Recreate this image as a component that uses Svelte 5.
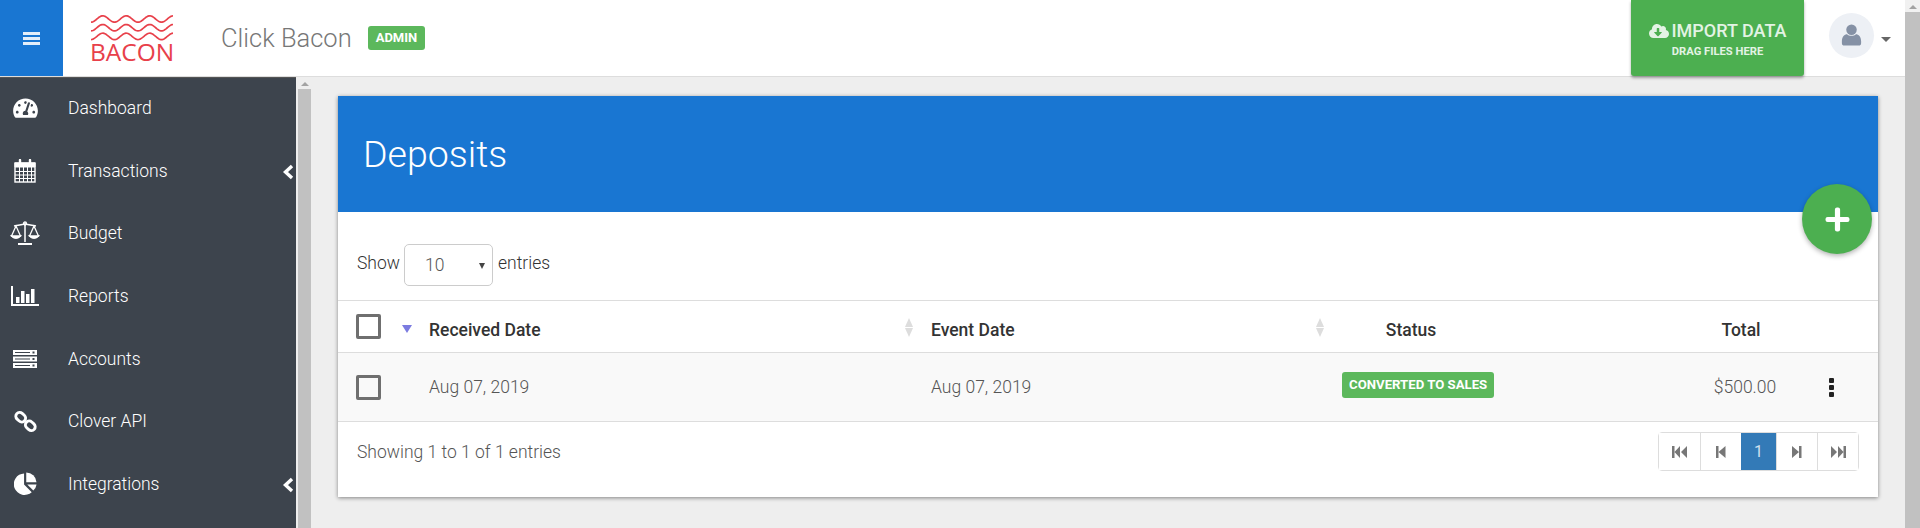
<script>
  const nav = [
    { label: 'Dashboard', icon: 'gauge' },
    { label: 'Transactions', icon: 'calendar', more: true },
    { label: 'Budget', icon: 'scale' },
    { label: 'Reports', icon: 'chart' },
    { label: 'Accounts', icon: 'server' },
    { label: 'Clover API', icon: 'link' },
    { label: 'Integrations', icon: 'pie', more: true }
  ];

  // logo wave, one period is about 23px
  function wave(y) {
    let d = '';
    for (let x = 0; x <= 82; x++) {
      d += (x ? 'L' : 'M') + x + ' ' + (y + 3.2 * Math.cos((x * Math.PI * 2) / 23.5)).toFixed(2);
    }
    return d;
  }
</script>

<div class="page">
  <div class="app">
    <header class="topbar">
      <button class="burger" aria-label="Menu">
        <span></span><span></span><span></span>
      </button>
      <div class="logo">
        <svg class="waves" viewBox="0 0 82 26" width="82" height="26" fill="none" stroke="#e8404a" stroke-width="1.7">
          <path d={wave(4)} />
          <path d={wave(12.7)} />
          <path d={wave(21.4)} />
        </svg>
        <div class="logo-text">BACON</div>
      </div>
      <div class="brand">Click Bacon</div>
      <span class="admin">ADMIN</span>
      <div class="spacer"></div>
      <button class="import">
        <span class="import-main">
          <svg viewBox="0 0 640 512" width="20" height="16" fill="currentColor"><path d="M537.6 226.6c4.1-10.7 6.4-22.4 6.4-34.6 0-53-43-96-96-96-19.7 0-38.1 6-53.3 16.2C367 64.2 315.3 32 256 32c-88.4 0-160 71.6-160 160 0 2.7.1 5.4.2 8.1C40.2 219.8 0 273.2 0 336c0 79.5 64.5 144 144 144h368c70.7 0 128-57.3 128-128 0-61.9-44-113.6-102.4-125.4zm-132.9 88.7L299.3 420.7c-6.2 6.2-16.4 6.2-22.6 0L171.3 315.3c-10.1-10.1-2.9-27.3 11.3-27.3H248V176c0-8.8 7.2-16 16-16h48c8.8 0 16 7.2 16 16v112h65.4c14.2 0 21.4 17.2 11.3 27.3z"/></svg>
          IMPORT DATA
        </span>
        <span class="import-sub">DRAG FILES HERE</span>
      </button>
      <div class="avatar">
        <svg viewBox="0 0 24 26" width="21" height="24" fill="#8591a5">
          <circle cx="12" cy="7" r="6" />
          <path d="M1 20 C1 15 4 12 7 12 C9 14.500 15 14.500 17 12 C20 12 23 15 23 20 V22 Q23 25 20 25 H4 Q1 25 1 22 Z" />
        </svg>
      </div>
      <span class="caret"></span>
    </header>

    <div class="body">
      <aside class="sidebar">
        {#each nav as item}
          <a class="nav-item" href="#top">
            <span class="nav-icon">
              {#if item.icon === 'gauge'}
                <svg viewBox="0 0 576 512" width="25" height="22" fill="#fff"><path d="M288 32C128.94 32 0 160.94 0 320c0 52.8 14.25 102.26 39.06 144.8 5.61 9.62 16.3 15.2 27.44 15.2h443c11.14 0 21.83-5.58 27.44-15.2C561.75 422.26 576 372.8 576 320c0-159.06-128.94-288-288-288zm0 64c14.71 0 26.58 10.13 30.32 23.65-1.11 2.26-2.64 4.23-3.45 6.67l-9.22 27.67c-5.13 3.49-10.97 6.01-17.64 6.01-17.67 0-32-14.33-32-32S270.33 96 288 96zM96 384c-17.67 0-32-14.33-32-32s14.33-32 32-32 32 14.33 32 32-14.33 32-32 32zm48-160c-17.67 0-32-14.33-32-32s14.33-32 32-32 32 14.33 32 32-14.33 32-32 32zm246.77-72.41l-61.33 184C343.13 347.33 352 364.54 352 384c0 11.72-3.38 22.55-8.88 32H232.88c-5.5-9.45-8.88-20.28-8.88-32 0-33.94 26.5-61.43 59.9-63.59l61.34-184.01c4.17-12.56 17.73-19.45 30.36-15.17 12.57 4.19 19.35 17.79 15.17 30.36zm14.66 57.2l15.52-46.55c3.47-1.29 7.13-2.23 11.05-2.23 17.67 0 32 14.33 32 32s-14.33 32-32 32c-11.38-.01-20.89-6.28-26.57-15.22zM480 384c-17.67 0-32-14.33-32-32s14.33-32 32-32 32 14.33 32 32-14.33 32-32 32z"/></svg>
              {:else if item.icon === 'calendar'}
                <svg viewBox="0 0 22 24" width="22" height="24" fill="none" stroke="#fff">
                  <path d="M1 4 H21 V8 H1 Z" fill="#fff" />
                  <rect x="1" y="4" width="20" height="19" stroke-width="1.4" />
                  <path d="M1 12.500 H21 M1 16 H21 M1 19.500 H21 M5.500 8 V23 M9.500 8 V23 M13.500 8 V23 M17.500 8 V23" stroke-width="1" />
                  <path d="M6 1 V5 M16 1 V5" stroke-width="2.400" stroke-linecap="round" />
                </svg>
              {:else if item.icon === 'scale'}
                <svg viewBox="0 0 30 24" width="30" height="24" fill="none" stroke="#fff" stroke-width="1.300">
                  <path d="M15 2 V21 M4 5 L15 3 L26 5" stroke-width="1.500" />
                  <circle cx="15" cy="2.500" r="1.500" />
                  <path d="M6 5 L1.500 15 Q6 19 10.500 15 Z M24 5 L19.500 15 Q24 19 28.500 15 Z" />
                  <path d="M1.500 15 Q6 19 10.500 15 Z M19.500 15 Q24 19 28.500 15 Z" fill="#fff" />
                  <path d="M8 23 H22" stroke-width="2" />
                </svg>
              {:else if item.icon === 'chart'}
                <svg viewBox="0 0 28 21" width="28" height="21" fill="#fff">
                  <path d="M0 0 H2 V18 H28 V20 H0 Z" />
                  <rect x="5" y="11" width="3.500" height="6" />
                  <rect x="10" y="5" width="3.500" height="12" />
                  <rect x="15" y="8" width="3.500" height="9" />
                  <rect x="20" y="3" width="3.500" height="14" />
                </svg>
              {:else if item.icon === 'server'}
                <svg viewBox="0 0 24 18" width="24" height="18">
                  <g fill="#fff">
                    <rect width="24" height="5" />
                    <rect y="6.500" width="24" height="5" />
                    <rect y="13" width="24" height="5" />
                  </g>
                  <g fill="#3d444d">
                    <rect x="2" y="2" width="15" height="1" />
                    <rect x="19.500" y="1.500" width="2" height="2" />
                    <rect x="2" y="8.500" width="15" height="1" />
                    <rect x="19.500" y="8" width="2" height="2" />
                    <rect x="2" y="15" width="15" height="1" />
                    <rect x="19.500" y="14.500" width="2" height="2" />
                  </g>
                </svg>
              {:else if item.icon === 'link'}
                <svg viewBox="0 0 24 24" width="23" height="23" fill="none" stroke="#fff" stroke-width="3">
                  <rect x="1.500" y="3.500" width="11" height="8" rx="4" transform="rotate(42 7 7.500)" />
                  <rect x="11.500" y="12.500" width="11" height="8" rx="4" transform="rotate(42 17 16.500)" />
                </svg>
              {:else if item.icon === 'pie'}
                <svg viewBox="0 0 24 24" width="23" height="23" fill="#fff">
                  <path d="M10.500 1.500 V13 L18.500 21 A11.200 11.200 0 1 1 10.500 1.500 Z" />
                  <path d="M12.800 0.500 A11 11 0 0 1 23.500 10.600 H12.800 Z" />
                  <path d="M13.800 13 H23.500 A11 11 0 0 1 20.200 19.400 Z" fill="#fff" />
                </svg>
              {/if}
            </span>
            <span class="nav-label">{item.label}</span>
            {#if item.more}
              <svg class="chevron" viewBox="0 0 12 16" width="12" height="16" fill="none" stroke="#fff" stroke-width="3.400"><path d="M10 2 L3.500 8 L10 14" /></svg>
            {/if}
          </a>
        {/each}
      </aside>

      <div class="side-scroll">
        <span class="arrow-up"></span>
        <span class="thumb"></span>
      </div>

      <main class="content">
        <section class="card">
          <div class="card-head">
            <h1>Deposits</h1>
            <button class="fab" aria-label="Add deposit">
              <svg viewBox="0 0 24 24" width="25" height="25" fill="#fff"><path d="M9.500 2.500 Q9.500 0.500 11.500 0.500 H12.500 Q14.500 0.500 14.500 2.500 V9.500 H21.500 Q23.500 9.500 23.500 11.500 V12.500 Q23.500 14.500 21.500 14.500 H14.500 V21.500 Q14.500 23.500 12.500 23.500 H11.500 Q9.500 23.500 9.500 21.500 V14.500 H2.500 Q0.500 14.500 0.500 12.500 V11.500 Q0.500 9.500 2.500 9.500 H9.500 Z" /></svg>
            </button>
          </div>

          <div class="length">
            Show
            <span class="select">10<i></i></span>
            entries
          </div>

          <table>
            <thead>
              <tr>
                <th class="c-check"><span class="box"></span><span class="sorted"></span></th>
                <th class="c-date">Received Date<span class="sorter"></span></th>
                <th class="c-date2">Event Date<span class="sorter"></span></th>
                <th class="c-status">Status</th>
                <th class="c-total">Total</th>
                <th class="c-menu"></th>
              </tr>
            </thead>
            <tbody>
              <tr>
                <td class="c-check"><span class="box"></span></td>
                <td class="c-date">Aug 07, 2019</td>
                <td class="c-date2">Aug 07, 2019</td>
                <td class="c-status"><span class="badge">CONVERTED TO SALES</span></td>
                <td class="c-total">$500.00</td>
                <td class="c-menu"><span class="kebab"><i></i><i></i><i></i></span></td>
              </tr>
            </tbody>
          </table>

          <div class="foot">
            <span>Showing 1 to 1 of 1 entries</span>
            <div class="pager">
              <button aria-label="First">
                <svg viewBox="0 0 16 12" width="16" height="12" fill="#777"><path d="M0 0 H2.500 V12 H0 Z M8 0 V12 L2.500 6 Z M15 0 V12 L9 6 Z" /></svg>
              </button>
              <button aria-label="Previous">
                <svg viewBox="0 0 10 12" width="10" height="12" fill="#777"><path d="M0 0 H2.500 V12 H0 Z M9.500 0 V12 L2.500 6 Z" /></svg>
              </button>
              <button class="current">1</button>
              <button aria-label="Next">
                <svg viewBox="0 0 10 12" width="10" height="12" fill="#777"><path d="M0 0 L7 6 L0 12 Z M7 0 H9.500 V12 H7 Z" /></svg>
              </button>
              <button aria-label="Last">
                <svg viewBox="0 0 16 12" width="16" height="12" fill="#777"><path d="M1 0 L7 6 L1 12 Z M8 0 L13.500 6 L8 12 Z M13.500 0 H16 V12 H13.500 Z" /></svg>
              </button>
            </div>
          </div>
        </section>
      </main>
    </div>
  </div>

  <div class="page-scroll">
    <span class="arrow-up"></span>
    <span class="thumb"></span>
  </div>
</div>

<style>
  :global(body) {
    margin: 0;
    font-family: Roboto, 'Liberation Sans', sans-serif;
    background: #eee;
    overflow: hidden;
  }

  .page {
    display: flex;
    height: 528px;
    overflow: hidden;
  }

  .app {
    flex: 1;
    min-width: 0;
    display: flex;
    flex-direction: column;
  }

  .topbar {
    height: 76px;
    flex: none;
    display: flex;
    align-items: center;
    background: #fff;
    border-bottom: 1px solid #ddd;
    position: relative;
    z-index: 2;
  }

  .burger {
    width: 63px;
    height: 76px;
    flex: none;
    border: 0;
    padding: 0;
    background: #1976d2;
    display: flex;
    flex-direction: column;
    align-items: center;
    justify-content: center;
    gap: 2px;
  }

  .burger span {
    width: 17px;
    height: 3px;
    background: #e3eefa;
  }

  .logo {
    width: 82px;
    margin-left: 28px;
    flex: none;
    display: flex;
    flex-direction: column;
    align-items: center;
    padding-top: 1px;
  }

  .waves {
    display: block;
  }

  .logo-text {
    font-family: 'Open Sans', sans-serif;
    font-size: 24.500px;
    line-height: 22px;
    color: #e8404a;
  }

  .brand {
    margin-left: 48px;
    font-size: 25.500px;
    font-weight: 300;
    color: #777;
  }

  .admin {
    margin-left: 16px;
    background: #5cb85c;
    color: #fff;
    font-size: 13px;
    font-weight: 700;
    padding: 5px 8px;
    border-radius: 3px;
    line-height: 14px;
  }

  .spacer {
    flex: 1;
  }

  .import {
    width: 173px;
    height: 76px;
    flex: none;
    border: 0;
    padding: 2px 0 0;
    background: #4caf50;
    color: #e3f3e4;
    font-family: inherit;
    border-radius: 0 0 3px 3px;
    box-shadow: 0 2px 3px rgba(0, 0, 0, 0.35);
    display: flex;
    flex-direction: column;
    align-items: center;
    justify-content: center;
    gap: 5px;
  }

  .import-main {
    display: flex;
    align-items: center;
    gap: 3px;
    font-size: 18px;
    font-weight: 500;
    line-height: 20px;
  }

  .import-sub {
    font-size: 11.200px;
    font-weight: 700;
    line-height: 12px;
  }

  .avatar {
    width: 45px;
    height: 45px;
    margin-left: 25px;
    margin-top: -6px;
    flex: none;
    border-radius: 50%;
    background: #edf0f5;
    display: flex;
    align-items: center;
    justify-content: center;
  }

  .caret {
    margin: 2px 14px 0 7px;
    width: 0;
    height: 0;
    border-left: 5px solid transparent;
    border-right: 5px solid transparent;
    border-top: 5px solid #666;
  }

  .body {
    flex: 1;
    min-height: 0;
    display: flex;
  }

  .sidebar {
    width: 296px;
    flex: none;
    background: #3d444d;
    margin-right: 2px;
    box-shadow: inset 0 1px 0 #555;
  }

  .nav-item {
    height: 62.6px;
    display: flex;
    align-items: center;
    color: #fff;
    text-decoration: none;
    font-size: 17.500px;
    font-weight: 300;
    position: relative;
  }

  .nav-icon {
    width: 50px;
    margin-right: 18px;
    display: flex;
    justify-content: center;
  }

  .chevron {
    position: absolute;
    right: 2px;
    top: 24px;
  }

  .side-scroll,
  .page-scroll {
    width: 13px;
    flex: none;
    display: flex;
    flex-direction: column;
    align-items: center;
    background: #eee;
  }

  .page-scroll {
    width: 15px;
    background: #f1f1f1;
  }

  .arrow-up {
    flex: none;
    margin: 5px 0 3px;
    width: 0;
    height: 0;
    border-left: 4px solid transparent;
    border-right: 4px solid transparent;
    border-bottom: 4px solid #a3a3a3;
  }

  .thumb {
    flex: 1;
    align-self: stretch;
    background: #c1c1c1;
  }

  .content {
    flex: 1;
    min-width: 0;
    background: #eee;
    padding: 19px 27px 0 27px;
  }

  .card {
    background: #fff;
    height: 401px;
    box-shadow: 0 1px 4px rgba(0, 0, 0, 0.45);
    display: flex;
    flex-direction: column;
  }

  .card-head {
    height: 116px;
    flex: none;
    background: #1976d2;
    display: flex;
    align-items: center;
    padding-left: 25px;
    position: relative;
  }

  h1 {
    margin: 0;
    font-size: 37.500px;
    font-weight: 300;
    color: #fff;
  }

  .fab {
    position: absolute;
    right: 6px;
    top: 88px;
    width: 70px;
    height: 70px;
    border: 0;
    padding: 0;
    border-radius: 50%;
    background: #4caf50;
    box-shadow: 0 2px 5px rgba(0, 0, 0, 0.3);
    display: flex;
    align-items: center;
    justify-content: center;
  }

  .length {
    height: 88px;
    flex: none;
    box-sizing: border-box;
    display: flex;
    align-items: center;
    gap: 4px;
    padding: 13px 0 0 19px;
    font-size: 17.500px;
    font-weight: 300;
    color: #333;
  }

  .select {
    box-sizing: border-box;
    width: 89px;
    height: 42px;
    margin-top: 4px;
    margin-right: 1px;
    border: 1px solid #ccc;
    border-radius: 5px;
    display: flex;
    align-items: center;
    padding-left: 20px;
    font-size: 17.500px;
    color: #555;
    position: relative;
  }

  .select i {
    position: absolute;
    right: 7px;
    top: 18px;
    border-left: 3.500px solid transparent;
    border-right: 3.500px solid transparent;
    border-top: 6px solid #444;
  }

  table {
    width: 100%;
    border-collapse: collapse;
    table-layout: fixed;
  }

  th,
  td {
    padding: 0;
    border-top: 1px solid #ddd;
    text-align: left;
    font-size: 17.500px;
    vertical-align: middle;
  }

  th {
    box-sizing: border-box;
    height: 52px;
    padding-top: 6px;
    font-weight: 500;
    color: #333;
    position: relative;
  }

  td {
    height: 68px;
    font-weight: 300;
    color: #555;
    background: #f9f9f9;
    border-bottom: 1px solid #ddd;
  }

  .c-check {
    width: 91px;
    padding: 0 0 0 18px;
    box-sizing: border-box;
  }

  th.c-check {
    padding-top: 0;
  }

  .c-date {
    width: 502px;
  }

  .c-date2 {
    width: 402px;
  }

  .c-status {
    width: 156px;
    text-align: center;
  }

  /* total column is centred in its last part, the rest is empty */
  .c-total {
    width: 304px;
    padding-left: 200px;
    box-sizing: border-box;
    text-align: center;
  }

  td.c-total {
    padding-left: 208px;
  }

  .box {
    display: inline-block;
    box-sizing: border-box;
    vertical-align: middle;
    width: 25px;
    height: 25px;
    border: 3px solid #6f6f6f;
    border-radius: 2px;
  }

  .sorted {
    position: absolute;
    left: 64px;
    top: 24px;
    border-left: 5px solid transparent;
    border-right: 5px solid transparent;
    border-top: 8px solid #7b7be0;
  }

  .sorter {
    position: absolute;
    right: 22px;
    top: 17px;
    width: 0;
    height: 19px;
  }

  th.c-date2 .sorter {
    right: 13px;
  }

  .sorter::before,
  .sorter::after {
    content: '';
    position: absolute;
    left: -4px;
    border-left: 4px solid transparent;
    border-right: 4px solid transparent;
  }

  .sorter::before {
    top: 0;
    border-bottom: 9px solid #ddd;
  }

  .sorter::after {
    bottom: 0;
    border-top: 9px solid #ddd;
  }

  .badge {
    display: inline-block;
    background: #5cb85c;
    color: #fff;
    font-size: 13.200px;
    font-weight: 700;
    line-height: 14px;
    padding: 6px 7px;
    border-radius: 3px;
    white-space: nowrap;
    margin-left: 9px;
    position: relative;
    top: -2px;
  }

  .kebab {
    display: flex;
    flex-direction: column;
    align-items: center;
    gap: 2px;
    margin-right: 8px;
  }

  .kebab i {
    width: 5px;
    height: 5px;
    border-radius: 1px;
    background: #222;
  }

  .foot {
    flex: 1;
    display: flex;
    justify-content: space-between;
    align-items: flex-start;
    padding: 10px 19px 0;
    font-size: 17.500px;
    font-weight: 300;
    color: #555;
  }

  .foot > span {
    margin-top: 10px;
  }

  .pager {
    display: flex;
    height: 39px;
    border: 1px solid #ddd;
    border-radius: 4px;
    box-sizing: border-box;
  }

  .pager button {
    width: 41px;
    border: 0;
    border-left: 1px solid #ddd;
    background: #fff;
    padding: 0;
    display: flex;
    align-items: center;
    justify-content: center;
    font-family: inherit;
    font-size: 16px;
  }

  .pager button:first-child {
    border-left: 0;
  }

  .pager .current {
    width: 35px;
    border: 0;
    background: #337ab7;
    color: #cfe0ef;
  }
</style>
